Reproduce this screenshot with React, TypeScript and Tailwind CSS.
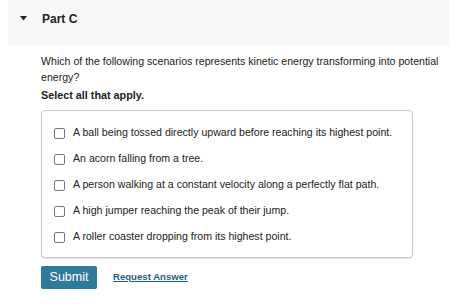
import React from 'react';

const options = [
  'A ball being tossed directly upward before reaching its highest point.',
  'An acorn falling from a tree.',
  'A person walking at a constant velocity along a perfectly flat path.',
  'A high jumper reaching the peak of their jump.',
  'A roller coaster dropping from its highest point.',
];

export default function App() {
  return (
    <div className="w-[474px] h-[305px] bg-white overflow-hidden font-['Liberation_Sans',Arial,sans-serif] text-[#222]">
      <div className="ml-2 w-[441px] h-[45px] bg-[#f7f7f7] flex items-center pl-3 pb-[8px]">
        <svg width="7" height="5" viewBox="0 0 7 5" className="mr-[15px]">
          <polygon points="0,0 7,0 3.5,4.5" fill="#222" />
        </svg>
        <span className="text-[12px] font-bold">Part C</span>
      </div>
      <div className="pl-[41px] pt-[8px]">
        <p className="text-[10.6px] leading-[16px] w-[410px]">
          Which of the following scenarios represents kinetic energy transforming into potential energy?
        </p>
        <p className="text-[10.8px] font-bold mt-[2px] leading-[16px]">Select all that apply.</p>
        <div className="mt-[7px] w-[372px] h-[148px] border border-[#c8c8c8] rounded-[4px] shadow-[0_1px_1px_rgba(0,0,0,0.12)] pl-[12px] pt-[14px] flex flex-col gap-[10px]">
          {options.map((o) => (
            <label key={o} className="flex items-center h-[16px]">
              <span className="w-[11px] h-[11px] border border-[#777] rounded-[2px] bg-white mr-[8px] shrink-0" />
              <span className="text-[10.6px]">{o}</span>
            </label>
          ))}
        </div>
        <div className="flex items-center mt-[8px]">
          <button className="w-[56px] h-[23px] bg-[#2e7a9b] rounded-[2px] text-white text-[12.5px]">Submit</button>
          <a className="ml-[16px] text-[9.6px] font-bold text-[#1f5d8a] underline">Request Answer</a>
        </div>
      </div>
    </div>
  );
}
